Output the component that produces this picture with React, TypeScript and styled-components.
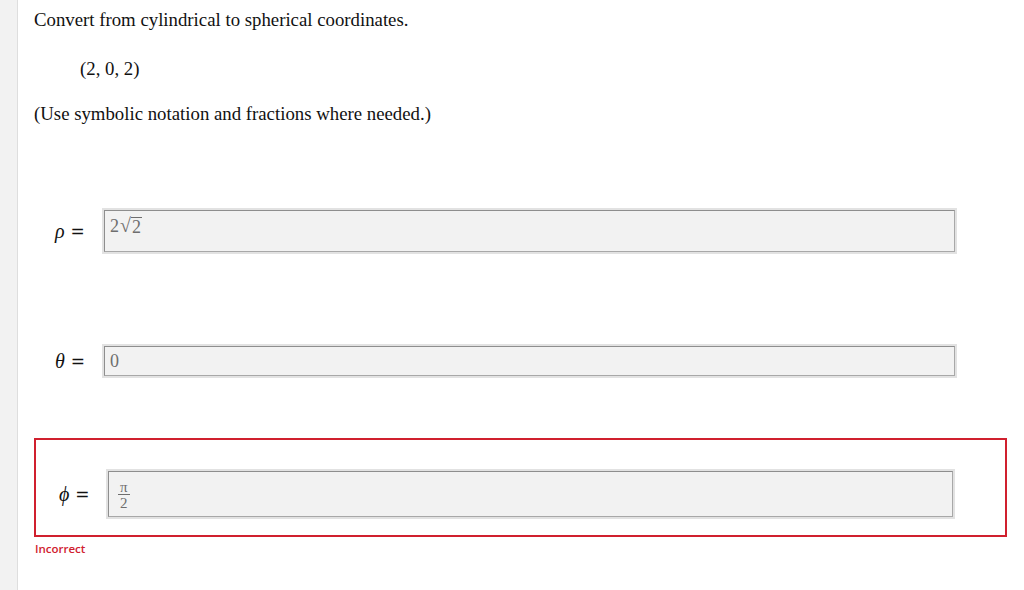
import React from "react";
import styled, { createGlobalStyle } from "styled-components";

const Global = createGlobalStyle`
  html, body {
    margin: 0;
    padding: 0;
    background: #fff;
  }
  body {
    font-family: "Liberation Serif", "Times New Roman", serif;
    color: #111;
  }
`;

const Page = styled.div`
  display: flex;
  width: 1024px;
  height: 590px;
  overflow: hidden;
`;

const Rail = styled.div`
  width: 17px;
  flex-shrink: 0;
  background: #f2f2f2;
  border-right: 1px solid #dedede;
`;

const Main = styled.div`
  flex: 1;
  padding: 9px 17px 0 16px;
`;

const Para = styled.p<{ $top: number; $indent?: number }>`
  margin: ${(p) => p.$top}px 0 0 ${(p) => p.$indent || 0}px;
  font-size: 18.8px;
  line-height: 21px;
`;

const Row = styled.div<{ $top: number }>`
  display: flex;
  align-items: center;
  margin-top: ${(p) => p.$top}px;
`;

const WrongBox = styled.div`
  margin-top: 62px;
  border: 2px solid #d0202e;
  padding: 31px 0 18px 2px;
  display: flex;
  align-items: center;
`;

const Label = styled.div`
  width: 70px;
  flex-shrink: 0;
  padding-left: 21px;
  box-sizing: border-box;
  font-size: 20px;
  white-space: nowrap;
  display: flex;
  align-items: center;
  em {
    font-style: italic;
    margin-right: 6px;
  }
`;

const Eq = styled.span`
  font-family: "DejaVu Sans", sans-serif;
  font-size: 17px;
`;

const Field = styled.div<{ $h: number }>`
  flex: 1;
  height: ${(p) => p.$h}px;
  margin-right: 52px;
  box-sizing: border-box;
  background: #f2f2f2;
  border: 1px solid #8e8e8e;
  border-right-color: #a8a8a8;
  border-bottom-color: #a8a8a8;
  box-shadow: 0 0 0 2px #e2e2e2;
  padding: 3px 5px;
  color: #6e6e6e;
  font-size: 18px;
  line-height: 22px;
`;

const Sqrt = styled.span`
  display: inline-flex;
  align-items: flex-end;
`;

const Radical = styled.span`
  font-size: 20px;
  margin-left: 1px;
  line-height: 22px;
`;

const Radicand = styled.span`
  border-top: 1px solid #6e6e6e;
  padding: 0 1px;
  line-height: 18px;
`;

const Frac = styled.span`
  display: inline-flex;
  flex-direction: column;
  align-items: center;
  font-size: 15px;
  line-height: 14px;
  margin-left: 4px;
  margin-top: 2px;
  span + span {
    border-top: 1px solid #6e6e6e;
    padding: 0 2px;
    line-height: 17px;
  }
`;

const Incorrect = styled.div`
  margin-top: 4px;
  padding-left: 1px;
  font-family: "Open Sans", "Liberation Sans", sans-serif;
  font-weight: 600;
  font-size: 11.5px;
  color: #d0202e;
`;

export default function App() {
  return (
    <>
      <Global />
      <Page>
        <Rail />
        <Main>
          <Para $top={0}>Convert from cylindrical to spherical coordinates.</Para>
          <Para $top={28} $indent={46}>(2, 0, 2)</Para>
          <Para $top={24}>(Use symbolic notation and fractions where needed.)</Para>

          <Row $top={86}>
            <Label>
              <em>ρ</em>
              <Eq>=</Eq>
            </Label>
            <Field $h={42}>
              2
              <Sqrt>
                <Radical>√</Radical>
                <Radicand>2</Radicand>
              </Sqrt>
            </Field>
          </Row>

          <Row $top={94}>
            <Label>
              <em>θ</em>
              <Eq>=</Eq>
            </Label>
            <Field $h={30}>0</Field>
          </Row>

          <WrongBox>
            <Label>
              <em>ϕ</em>
              <Eq>=</Eq>
            </Label>
            <Field $h={46}>
              <Frac>
                <span>π</span>
                <span>2</span>
              </Frac>
            </Field>
          </WrongBox>
          <Incorrect>Incorrect</Incorrect>
        </Main>
      </Page>
    </>
  );
}
